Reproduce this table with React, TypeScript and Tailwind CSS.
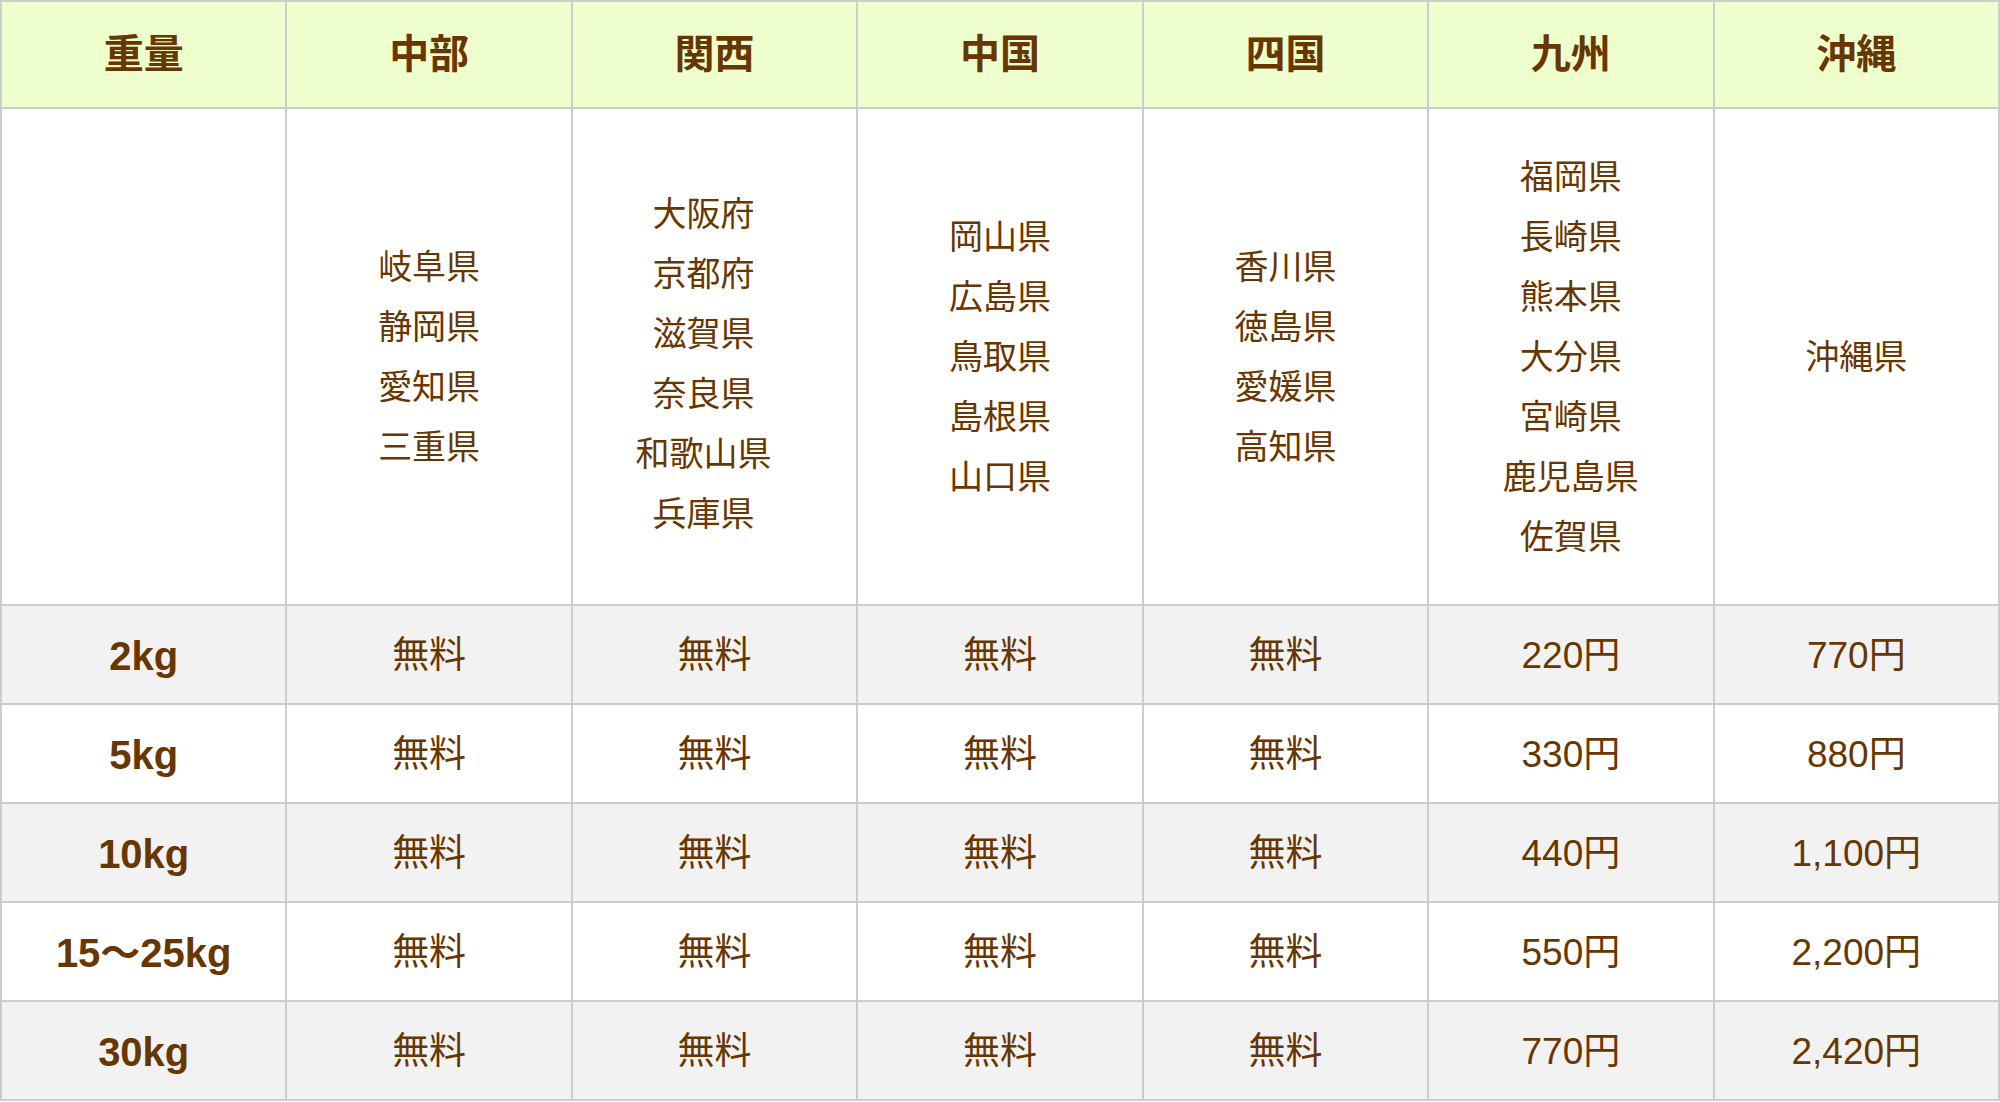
import React from 'react';

// Shipping fee table by weight and region
const regions = ['中部', '関西', '中国', '四国', '九州', '沖縄'];

const prefectures: string[][] = [
  ['岐阜県', '静岡県', '愛知県', '三重県'],
  ['大阪府', '京都府', '滋賀県', '奈良県', '和歌山県', '兵庫県'],
  ['岡山県', '広島県', '鳥取県', '島根県', '山口県'],
  ['香川県', '徳島県', '愛媛県', '高知県'],
  ['福岡県', '長崎県', '熊本県', '大分県', '宮崎県', '鹿児島県', '佐賀県'],
  ['沖縄県'],
];

const rows = [
  { weight: '2kg', fees: ['無料', '無料', '無料', '無料', '220円', '770円'] },
  { weight: '5kg', fees: ['無料', '無料', '無料', '無料', '330円', '880円'] },
  { weight: '10kg', fees: ['無料', '無料', '無料', '無料', '440円', '1,100円'] },
  { weight: '15～25kg', fees: ['無料', '無料', '無料', '無料', '550円', '2,200円'] },
  { weight: '30kg', fees: ['無料', '無料', '無料', '無料', '770円', '2,420円'] },
];

const font = "font-['Liberation_Sans','Noto_Sans_CJK_JP',sans-serif]";

export default function App() {
  return (
    <div className={`w-[2000px] bg-white text-[#683600] ${font}`}>
      <div className="grid grid-cols-7 gap-[2px] bg-[#cccccc] p-[2px]">
        {/* Header */}
        <div className="flex h-[105px] items-center justify-center bg-[#eefecc] pb-[2px] text-[40px] font-bold">
          重量
        </div>
        {regions.map((r) => (
          <div
            key={r}
            className="flex h-[105px] items-center justify-center bg-[#eefecc] pb-[2px] text-[40px] font-bold"
          >
            {r}
          </div>
        ))}

        {/* Prefectures */}
        <div className="h-[495px] bg-white" />
        {prefectures.map((list, i) => (
          <div
            key={i}
            className={`flex h-[495px] flex-col items-center justify-center bg-white text-[34px] leading-[60px] ${
              i === 1 ? 'pr-[22px] pt-[14px]' : ''
            }`}
          >
            {list.map((p) => (
              <span key={p}>{p}</span>
            ))}
          </div>
        ))}

        {/* Fees */}
        {rows.map((row, ri) => {
          const bg = ri % 2 === 0 ? 'bg-[#f2f2f2]' : 'bg-white';
          return (
            <React.Fragment key={row.weight}>
              <div className={`flex h-[97px] items-center justify-center pt-[3px] text-[40px] font-bold ${bg}`}>
                {row.weight}
              </div>
              {row.fees.map((f, fi) => (
                <div key={fi} className={`flex h-[97px] items-center justify-center pt-[3px] text-[37px] ${bg}`}>
                  {f}
                </div>
              ))}
            </React.Fragment>
          );
        })}
      </div>
    </div>
  );
}
